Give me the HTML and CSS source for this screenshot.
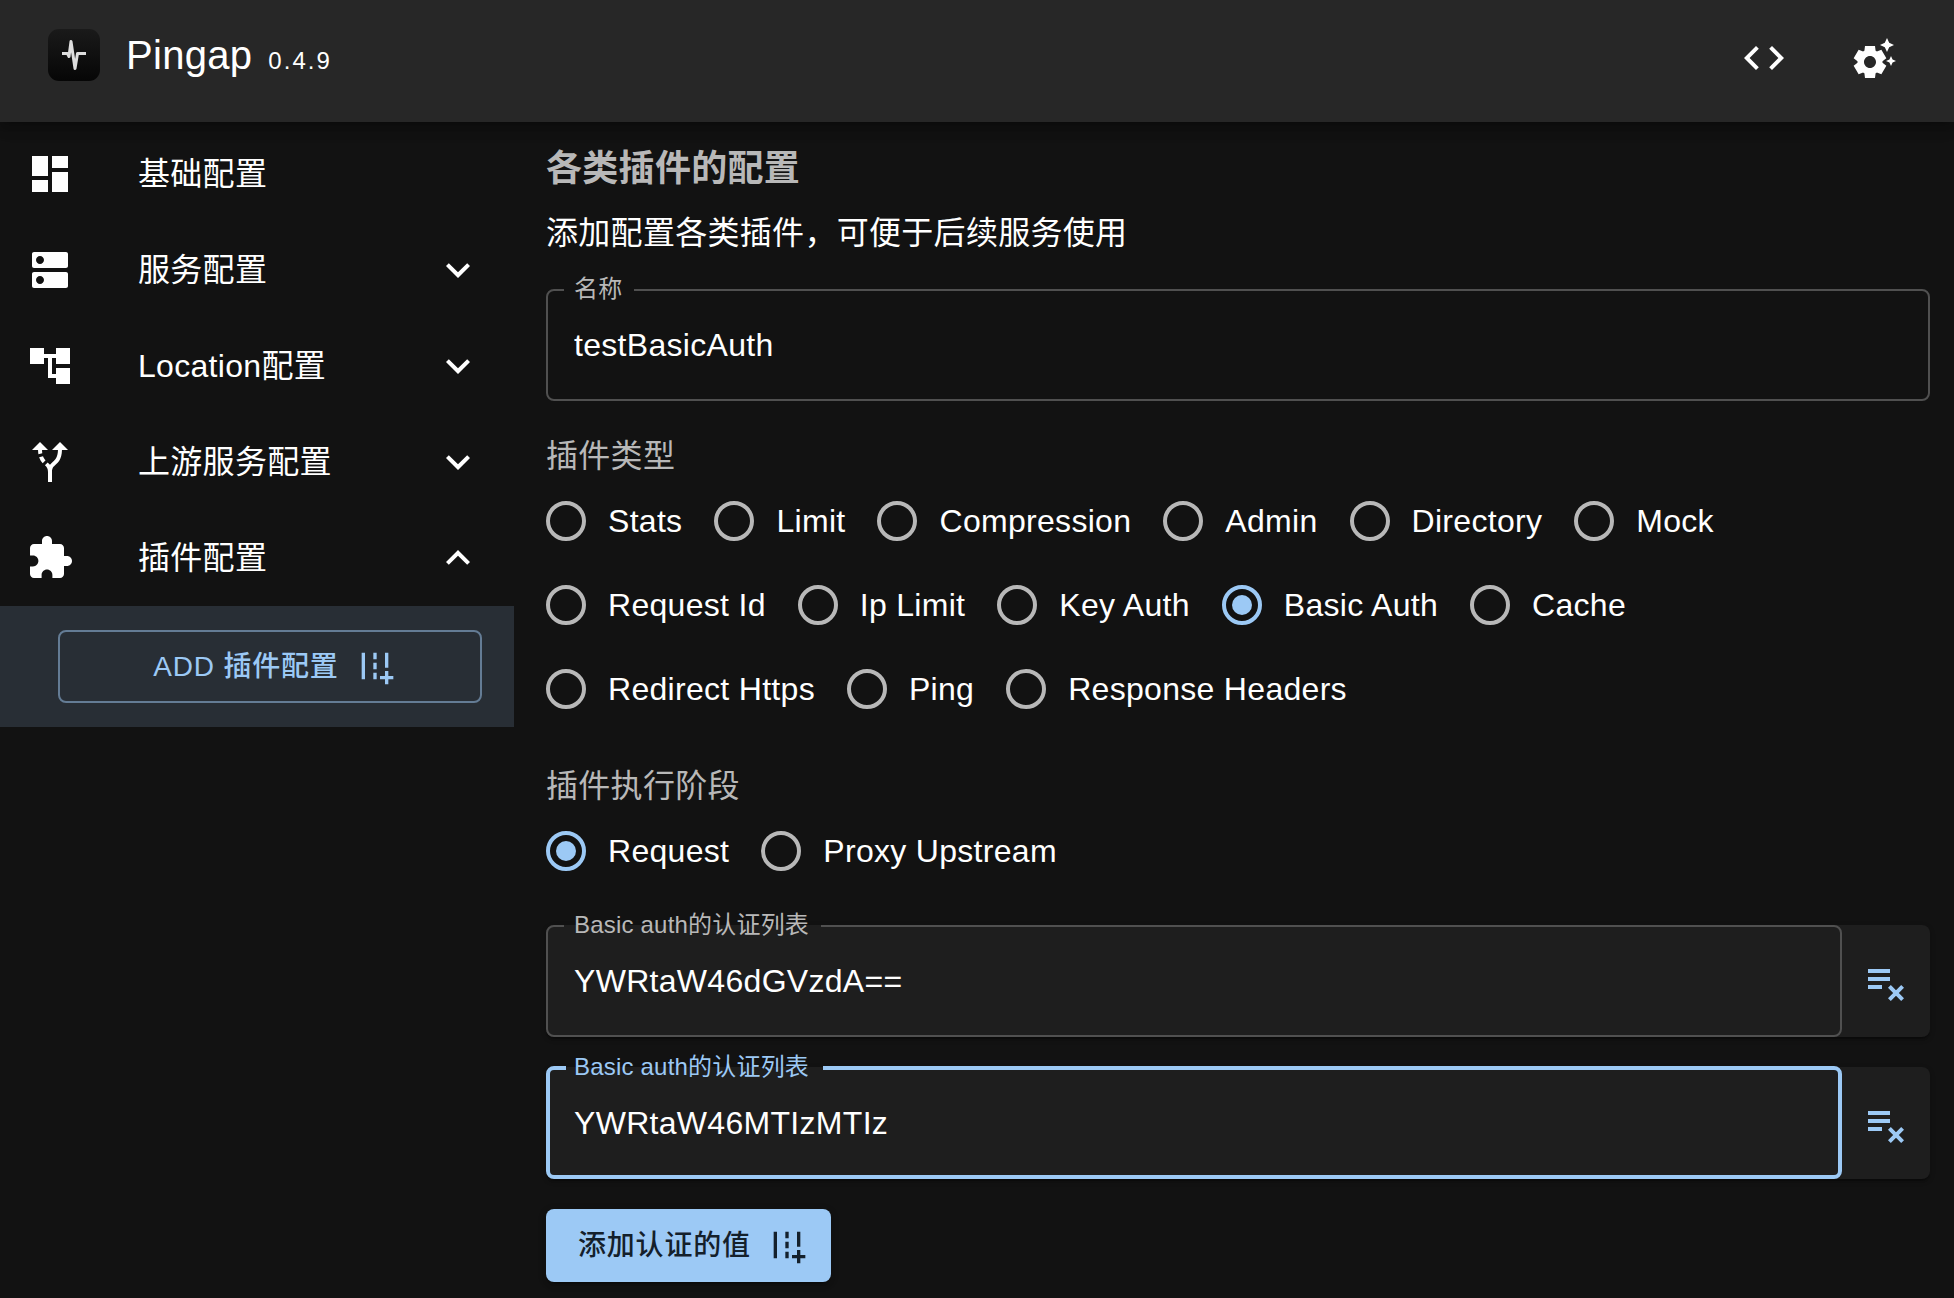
FILE: index.html
```html
<!DOCTYPE html>
<html lang="zh-CN">
<head>
<meta charset="utf-8">
<title>Pingap</title>
<link rel="stylesheet" href="styles.css">
</head>
<body>
<svg class="sprite" aria-hidden="true">
  <symbol id="add-road" viewBox="0 0 24 24"><path d="M20 18v-3h-2v3h-3v2h3v3h2v-3h3v-2zM18 4h2v9h-2zM4 4h2v16H4zm7 0h2v4h-2zm0 6h2v4h-2zm0 6h2v4h-2z"/></symbol>
  <symbol id="expand-more" viewBox="0 0 24 24"><path d="M16.59 8.59 12 13.17 7.41 8.59 6 10l6 6 6-6z"/></symbol>
  <symbol id="expand-less" viewBox="0 0 24 24"><path d="m12 8-6 6 1.41 1.41L12 10.83l4.59 4.58L18 14z"/></symbol>
  <symbol id="playlist-remove" viewBox="0 0 24 24"><path d="M14 10H3v2h11zm0-4H3v2h11zM3 16h7v-2H3zm11.41 6L17 19.41 19.59 22 21 20.59 18.41 18 21 15.41 19.59 14 17 16.59 14.41 14 13 15.41 15.59 18 13 20.59z"/></symbol>
</svg>

<header class="appbar">
  <svg class="logo" viewBox="0 0 52 52">
    <defs><linearGradient id="logo-bg" x1="0" y1="0" x2="0" y2="1"><stop offset="0" stop-color="#1a1a1a"/><stop offset="1" stop-color="#060606"/></linearGradient></defs>
    <rect width="52" height="52" rx="11" fill="url(#logo-bg)"/>
    <path d="M14 24.500h5.500l1.500 3L23 12.500l4 27L29.500 24.500H38" fill="none" stroke="#dedede" stroke-width="3" stroke-linejoin="round"/>
  </svg>
  <h1 class="brand">Pingap<span class="version">0.4.9</span></h1>
  <div class="actions">
    <svg class="icon" viewBox="0 0 24 24"><path d="M9.400 16.600 4.800 12l4.600-4.600L8 6l-6 6 6 6zm5.200 0 4.600-4.600-4.600-4.600L16 6l6 6-6 6z"/></svg>
    <svg class="icon" viewBox="0 0 24 24"><path d="M17.41 6.59 15 5.5l2.41-1.09L18.5 2l1.09 2.41L22 5.5l-2.41 1.09L18.5 9zm3.87 6.13L20.5 11l-.78 1.72-1.72.78 1.72.78.78 1.72.78-1.72L23 13.5zm-5.04 1.65 1.94 1.47-2.5 4.33-2.24-.94c-.2.13-.42.26-.64.37l-.3 2.4h-5l-.3-2.41c-.22-.11-.43-.23-.64-.37l-2.24.94-2.5-4.33 1.94-1.47c-.01-.11-.01-.24-.01-.36s0-.25.01-.37l-1.940-1.470 2.500-4.330 2.240.940c.2-.13.42-.26.64-.37L7.500 6h5l.3 2.410c.22.11.43.23.64.37l2.240-.94 2.500 4.330-1.940 1.470c.01.12.01.24.01.37s0 .24-.01.36M13 14c0-1.660-1.340-3-3-3s-3 1.340-3 3 1.340 3 3 3 3-1.340 3-3"/></svg>
  </div>
</header>

<div class="layout">
  <nav class="sidebar">
    <a class="nav-item">
      <svg class="icon" viewBox="0 0 24 24"><path d="M3 13h8V3H3zm0 8h8v-6H3zm10 0h8V11h-8zm0-18v6h8V3z"/></svg>
      <span class="nav-text">基础配置</span>
    </a>
    <a class="nav-item">
      <svg class="icon" viewBox="0 0 24 24"><path d="M20 13H4c-.55 0-1 .45-1 1v6c0 .55.45 1 1 1h16c.55 0 1-.45 1-1v-6c0-.55-.45-1-1-1M7 19c-1.100 0-2-.9-2-2s.9-2 2-2 2 .9 2 2-.9 2-2 2M20 3H4c-.55 0-1 .45-1 1v6c0 .55.45 1 1 1h16c.55 0 1-.45 1-1V4c0-.55-.45-1-1-1M7 9c-1.100 0-2-.9-2-2s.9-2 2-2 2 .9 2 2-.9 2-2 2"/></svg>
      <span class="nav-text">服务配置</span>
      <svg class="icon"><use href="#expand-more"/></svg>
    </a>
    <a class="nav-item">
      <svg class="icon" viewBox="0 0 24 24"><path d="M22 11V3h-7v3H9V3H2v8h7V8h2v10h4v3h7v-8h-7v3h-2V8h2v3z"/></svg>
      <span class="nav-text">Location配置</span>
      <svg class="icon"><use href="#expand-more"/></svg>
    </a>
    <a class="nav-item">
      <svg class="icon" viewBox="0 0 24 24"><path d="m9.780 11.160-1.420 1.420c-.68-.69-1.340-1.580-1.790-2.940l1.940-.49c.32.89.77 1.500 1.270 2.010M11 6 7 2 3 6h3.020c.02.81.08 1.540.19 2.170l1.940-.49C8.080 7.200 8.030 6.630 8.020 6zm10 0-4-4-4 4h2.990c-.1 3.680-1.280 4.750-2.540 5.880-.5.44-1.010.92-1.450 1.550-.34-.49-.73-.88-1.130-1.240L9.460 13.600c.93.85 1.540 1.540 1.540 3.400v5h2v-5c0-2.020.71-2.660 1.790-3.630 1.380-1.240 3.080-2.780 3.200-7.370z"/></svg>
      <span class="nav-text">上游服务配置</span>
      <svg class="icon"><use href="#expand-more"/></svg>
    </a>
    <a class="nav-item">
      <svg class="icon" viewBox="0 0 24 24"><path d="M20.500 11H19V7c0-1.100-.9-2-2-2h-4V3.500C13 2.120 11.880 1 10.500 1S8 2.120 8 3.500V5H4c-1.100 0-1.990.9-1.990 2v3.800H3.500c1.490 0 2.700 1.210 2.700 2.700s-1.210 2.700-2.700 2.700H2V20c0 1.100.9 2 2 2h3.800v-1.500c0-1.490 1.210-2.700 2.700-2.700 1.490 0 2.700 1.210 2.700 2.700V22H17c1.100 0 2-.9 2-2v-4h1.500c1.380 0 2.500-1.120 2.500-2.500S21.880 11 20.500 11"/></svg>
      <span class="nav-text">插件配置</span>
      <svg class="icon"><use href="#expand-less"/></svg>
    </a>
    <div class="submenu">
      <button class="btn btn-outlined" type="button"><span class="btn-text">ADD 插件配置</span><svg class="icon icon-end"><use href="#add-road"/></svg></button>
    </div>
  </nav>

  <main class="content">
    <h2 class="title">各类插件的配置</h2>
    <p class="description">添加配置各类插件，可便于后续服务使用</p>

    <fieldset class="field name-field">
      <legend>名称</legend>
      <input type="text" value="testBasicAuth">
    </fieldset>

    <section class="group">
      <h3 class="group-label">插件类型</h3>
      <div class="radios">
        <label class="option"><span class="radio"></span>Stats</label>
        <label class="option"><span class="radio"></span>Limit</label>
        <label class="option"><span class="radio"></span>Compression</label>
        <label class="option"><span class="radio"></span>Admin</label>
        <label class="option"><span class="radio"></span>Directory</label>
        <label class="option"><span class="radio"></span>Mock</label>
        <label class="option"><span class="radio"></span>Request Id</label>
        <label class="option"><span class="radio"></span>Ip Limit</label>
        <label class="option"><span class="radio"></span>Key Auth</label>
        <label class="option"><span class="radio checked"></span>Basic Auth</label>
        <label class="option"><span class="radio"></span>Cache</label>
        <label class="option"><span class="radio"></span>Redirect Https</label>
        <label class="option"><span class="radio"></span>Ping</label>
        <label class="option"><span class="radio"></span>Response Headers</label>
      </div>
    </section>

    <section class="group">
      <h3 class="group-label">插件执行阶段</h3>
      <div class="radios">
        <label class="option"><span class="radio checked"></span>Request</label>
        <label class="option"><span class="radio"></span>Proxy Upstream</label>
      </div>
    </section>

    <div class="auth-list">
      <div class="paper">
        <fieldset class="field">
          <legend>Basic auth的认证列表</legend>
          <input type="text" value="YWRtaW46dGVzdA==">
        </fieldset>
        <button class="remove" type="button"><svg class="icon"><use href="#playlist-remove"/></svg></button>
      </div>
      <div class="paper">
        <fieldset class="field focused">
          <legend>Basic auth的认证列表</legend>
          <input type="text" value="YWRtaW46MTIzMTIz">
        </fieldset>
        <button class="remove" type="button"><svg class="icon"><use href="#playlist-remove"/></svg></button>
      </div>
      <button class="btn btn-contained" type="button"><span class="btn-text">添加认证的值</span><svg class="icon icon-end"><use href="#add-road"/></svg></button>
    </div>
  </main>
</div>
</body>
</html>
```

FILE: styles.css
```css
:root {
  --bg: #121212;
  --paper: #1e1e1e;
  --primary: #9cc9f5;
  --muted: #b8b8b8;
  --outline: #505050;
}

* {
  box-sizing: border-box;
}

body {
  margin: 0;
  height: 1298px;
  overflow: hidden;
  background: var(--bg);
  color: #fff;
  font-family: "Liberation Sans", "Noto Sans CJK SC", sans-serif;
  font-size: 32px;
  letter-spacing: 0.3px;
}

h1, h2, h3, p {
  margin: 0;
  font-weight: 400;
}

.sprite {
  display: none;
}

.icon {
  flex: none;
  width: 48px;
  height: 48px;
  fill: currentColor;
}

/* Top bar */
.appbar {
  position: relative;
  display: flex;
  align-items: flex-start;
  height: 122px;
  padding: 0 56px 0 48px;
  background: #272727;
  box-shadow: 0 4px 8px -2px rgba(0, 0, 0, .2), 0 8px 10px rgba(0, 0, 0, .14), 0 2px 20px rgba(0, 0, 0, .12);
}

.logo {
  width: 52px;
  height: 52px;
  margin-top: 29px;
}

.brand {
  flex: 1;
  margin: 25px 0 0 26px;
  font-size: 40px;
  line-height: 60px;
}

.version {
  margin-left: 16px;
  font-size: 24px;
  letter-spacing: 2px;
}

.actions {
  display: flex;
  gap: 62px;
  padding-top: 34px;
}

/* Columns */
.layout {
  display: flex;
  height: 1176px;
}

.sidebar {
  width: 514px;
  padding-top: 4px;
}

.nav-item {
  display: flex;
  align-items: center;
  height: 96px;
  padding: 0 32px 0 26px;
}

.nav-text {
  flex: 1;
  margin-left: 64px;
  line-height: 48px;
}

.submenu {
  display: flex;
  padding: 24px 32px 24px 58px;
  background: #282e35;
}

.btn {
  display: flex;
  align-items: center;
  justify-content: center;
  height: 73px;
  border-radius: 8px;
  font-family: inherit;
  font-size: 28px;
  font-weight: 500;
  letter-spacing: 0.8px;
}

.btn-text {
  padding-top: 1px;
  line-height: 44px;
}

.icon-end {
  width: 40px;
  height: 40px;
  margin: 0 -8px 1px 16px;
}

.btn-outlined {
  flex: 1;
  border: 2px solid #647c95;
  background: none;
  color: var(--primary);
}

.btn-contained {
  align-self: flex-start;
  padding: 0 32px;
  border: 0;
  background: var(--primary);
  color: #14202b;
  box-shadow: 0 6px 2px -4px rgba(0, 0, 0, .2), 0 4px 4px rgba(0, 0, 0, .14), 0 2px 10px rgba(0, 0, 0, .12);
}

/* Form */
.content {
  flex: 1;
  padding: 16px 24px 0 32px;
}

.title {
  color: var(--muted);
  font-size: 36px;
  font-weight: 700;
  line-height: 62px;
}

.description {
  line-height: 66px;
}

.field {
  min-width: 0;
  height: 123px;
  margin: -11px 0 0;
  padding: 0 16px;
  border: 2px solid var(--outline);
  border-radius: 8px;
}

.field legend {
  height: 24px;
  padding: 0 12px 0 10px;
  color: var(--muted);
  font-size: 24px;
  letter-spacing: 0.2px;
  line-height: 22px;
}

.field input {
  display: block;
  width: 100%;
  height: 86px;
  padding: 0 10px;
  border: 0;
  outline: 0;
  background: none;
  color: inherit;
  font: inherit;
  letter-spacing: inherit;
}

.field.focused {
  border: 4px solid var(--primary);
}

.field.focused legend {
  padding: 0 14px 0 8px;
  color: var(--primary);
}

.field.focused input {
  padding: 0 8px;
}

.name-field {
  margin-top: 12px;
}

.group {
  margin-top: 32px;
}

.group-label {
  color: var(--muted);
  font-size: 32px;
  line-height: 46px;
}

.radios {
  display: flex;
  flex-wrap: wrap;
}

.option {
  display: flex;
  align-items: center;
  height: 84px;
  margin-right: 32px;
}

.radio {
  display: grid;
  place-items: center;
  width: 40px;
  height: 40px;
  margin-right: 22px;
  border: 4px solid var(--muted);
  border-radius: 50%;
}

.radio.checked {
  border-color: var(--primary);
}

.radio.checked::after {
  content: "";
  width: 20px;
  height: 20px;
  border-radius: 50%;
  background: var(--primary);
}

.auth-list {
  display: flex;
  flex-direction: column;
  gap: 30px;
  margin-top: 32px;
}

.paper {
  display: flex;
  height: 112px;
  border-radius: 8px;
  background: var(--paper);
  box-shadow: 0 4px 2px -2px rgba(0, 0, 0, .2), 0 2px 2px rgba(0, 0, 0, .14), 0 2px 6px rgba(0, 0, 0, .12);
}

.paper .field {
  flex: 1;
}

.remove {
  display: grid;
  place-items: center;
  width: 88px;
  padding: 0;
  border: 0;
  background: none;
  color: var(--primary);
}
```
